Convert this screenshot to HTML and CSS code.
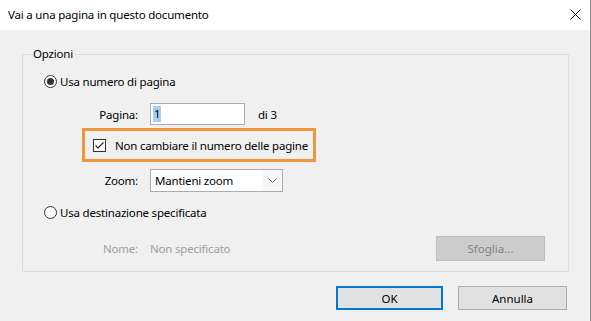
FILE: index.html
```html
<!DOCTYPE html>
<html lang="it">
<head>
  <meta charset="UTF-8" />
  <title>Vai a una pagina in questo documento</title>
  <link rel="stylesheet" href="styles.css">
</head>
<body>
  <div class="window">
    <div class="titlebar">
      <span class="title">Vai a una pagina in questo documento</span>
      <svg class="close" width="11" height="11" viewBox="0 0 11 11">
        <path d="M0.5 0.5 L10.5 10.5 M10.5 0.5 L0.5 10.5" stroke="#000" stroke-width="1" fill="none"/>
      </svg>
    </div>

    <div class="content">
      <fieldset class="group">
        <legend>Opzioni</legend>

        <div class="radio-row">
          <span class="radio checked"></span>Usa numero di pagina
        </div>

        <div class="field-row page-row">
          <span class="label">Pagina:</span>
          <div class="textbox"><span class="sel">1</span></div>
          <span class="of">di 3</span>
        </div>

        <div class="highlight">
          <span class="checkbox">
            <svg width="11" height="11" viewBox="0 0 11 11">
              <path d="M1.5 5.5 L4 8 L9.5 2.5" stroke="#222" stroke-width="1.1" fill="none"/>
            </svg>
          </span>
          Non cambiare il numero delle pagine
        </div>

        <div class="field-row zoom-row">
          <span class="label">Zoom:</span>
          <div class="select">
            <span class="select-text">Mantieni zoom</span>
            <span class="arrow">
              <svg width="9" height="5" viewBox="0 0 9 5">
                <path d="M0.5 0.5 L4.5 4.5 L8.5 0.5" stroke="#606060" stroke-width="1" fill="none"/>
              </svg>
            </span>
          </div>
        </div>

        <div class="radio-row second">
          <span class="radio"></span>Usa destinazione specificata
        </div>

        <div class="field-row name-row">
          <span class="label muted">Nome:</span>
          <span class="value muted">Non specificato</span>
          <button class="btn browse" disabled>Sfoglia...</button>
        </div>
      </fieldset>

      <div class="actions">
        <button class="btn default ok">OK</button>
        <button class="btn cancel">Annulla</button>
      </div>
    </div>
  </div>
</body>
</html>
```

FILE: styles.css
```css
* { box-sizing: border-box; margin: 0; padding: 0; }
html, body { height: 100%; }
body {
  font-family: "Segoe UI", "Noto Sans", sans-serif;
  font-size: 11.5px;
  letter-spacing: -0.2px;
  color: #000;
  background: #f0f0f0;
  overflow: hidden;
  white-space: nowrap;
}
.window {
  width: 591px; height: 321px;
  background: #f0f0f0;
  border-right: 1px solid #8c8c8c;
}
.titlebar {
  height: 30px;
  background: #fff;
  display: flex; align-items: center; justify-content: space-between;
  padding: 0 9px 0 8px;
}
.title { line-height: 16px; }
.close { display: block; margin-top: -1px; }

.content { padding: 16px 23px 0 22px; }
.group {
  width: 547px;
  border: 1px solid #dcdcdc;
  padding: 0 0 10px 0;
}
.group legend {
  margin-left: 8px;
  padding: 0 2px;
  line-height: 16px;
}

.radio-row {
  display: flex; align-items: center;
  height: 16px; margin-top: 11px;
  padding-left: 21px;
}
.radio-row.second { margin-top: 12px; }
.radio {
  width: 13px; height: 13px;
  border: 1px solid #333;
  border-radius: 50%;
  background: #fff;
  margin-right: 3px;
  display: flex; align-items: center; justify-content: center;
}
.radio.checked::after {
  content: "";
  width: 7px; height: 7px;
  border-radius: 50%;
  background: #333;
}

.field-row { display: flex; align-items: center; }
.field-row .label { width: 115px; text-align: right; margin-right: 12px; }
.page-row { margin-top: 14px; height: 22px; }
.textbox {
  width: 95px; height: 22px;
  background: #fff;
  border: 1px solid #adadad;
  padding-left: 2px;
  display: flex; align-items: center;
}
.sel { background: #a9cdf0; padding: 0 1px; line-height: 16px; }
.of { margin-left: 13px; }

.highlight {
  margin: 3px 0 0 59px;
  width: 234px; height: 34px;
  border: 3px solid #f0963a;
  display: flex; align-items: center;
  padding-left: 8px;
}
.checkbox {
  width: 13px; height: 13px;
  border: 1px solid #333;
  background: #fff;
  margin-right: 9px;
  display: flex; align-items: center; justify-content: center;
}
.checkbox svg { display: block; }

.zoom-row { margin-top: 7px; height: 23px; }
.select {
  width: 133px; height: 23px;
  background: #fff;
  border: 1px solid #acacac;
  display: flex; align-items: center;
}
.select-text { flex: 1; padding-left: 4px; }
.arrow {
  width: 20px; height: 100%;
  background: #f7f7f7;
  display: flex; align-items: center; justify-content: center;
}
.arrow svg { display: block; }

.name-row { margin-top: 16px; height: 25px; }
.muted { color: #9d9d9d; }
.value { flex: 1; }

.btn {
  font: inherit;
  background: #e1e1e1;
  border: 1px solid #adadad;
  color: #000;
  height: 24px;
}
.browse {
  width: 109px; height: 25px;
  margin-right: 23px;
  background: #cccccc;
  border-color: #bfbfbf;
  color: #838383;
}
.actions {
  display: flex; justify-content: flex-end; gap: 15px;
  margin-top: 14px;
}
.ok { width: 107px; }
.cancel { width: 109px; }
.default { border: 2px solid #0078d7; }
```
